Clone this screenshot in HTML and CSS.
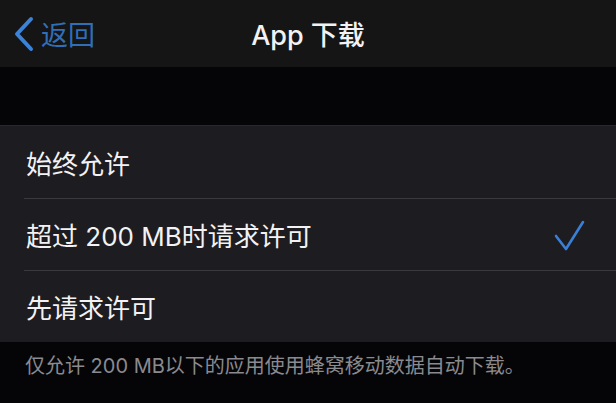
FILE: index.html
```html
<!DOCTYPE html>
<html>
  <head>
    <meta name="viewport" content="width=device-width, initial-scale=1" />
    <link rel="stylesheet" href="styles.css">
  </head>
  <body>
    <header class="navbar">
      <a href="#" class="back">
        <svg class="back-icon" width="22" height="36" viewBox="0 0 22 36">
          <path d="M18 3 L4 18 L18 33" fill="none" stroke="#3b82d9" stroke-width="4" stroke-linecap="round" stroke-linejoin="round" />
        </svg>
        <span>返回</span>
      </a>
      <h1 class="title">App 下载</h1>
      <div></div>
    </header>

    <div class="spacer"></div>

    <ul class="options">
      <li class="option">始终允许</li>
      <li class="option selected">
        超过 200 MB时请求许可
        <svg class="check" width="32" height="32" viewBox="0 0 32 32">
          <path d="M3 16 L13 29 L30 2" fill="none" stroke="#3b7fd4" stroke-width="2.6" stroke-linecap="round" stroke-linejoin="round" />
        </svg>
      </li>
      <li class="option">先请求许可</li>
    </ul>

    <p class="note">仅允许 200 MB以下的应用使用蜂窝移动数据自动下载。</p>
  </body>
</html>
```

FILE: styles.css
```css
* {
  box-sizing: border-box;
}

body {
  margin: 0;
  background-color: #050507;
  color: #f2f2f4;
  font-family: Inter, "Noto Sans CJK SC", sans-serif;
}

/* Top navigation bar */
.navbar {
  height: 67px;
  background-color: #151516;
  display: grid;
  grid-template-columns: 1fr auto 1fr;
  align-items: center;
}

.back {
  display: flex;
  align-items: center;
  gap: 6px;
  padding-left: 13px;
  color: #2f6fb8;
  text-decoration: none;
  font-size: 27px;
}

.title {
  margin: 0;
  font-size: 27px;
  font-weight: 500;
}

.spacer {
  height: 58px;
}

/* Grouped list of choices */
.options {
  list-style: none;
  margin: 0;
  padding: 0;
  background-color: #1d1c20;
  border-top: 1px solid #29282c;
}

.option {
  height: 72px;
  margin-left: 24px;
  padding-left: 2px;
  padding-right: 31px;
  display: flex;
  align-items: center;
  font-size: 26px;
}

.option + .option {
  border-top: 1px solid #3a393d;
}

.check {
  margin-left: auto;
  margin-top: 2px;
}

.note {
  margin: 0;
  padding: 8px 25px;
  color: #8a8a8f;
  font-size: 20px;
}
```
